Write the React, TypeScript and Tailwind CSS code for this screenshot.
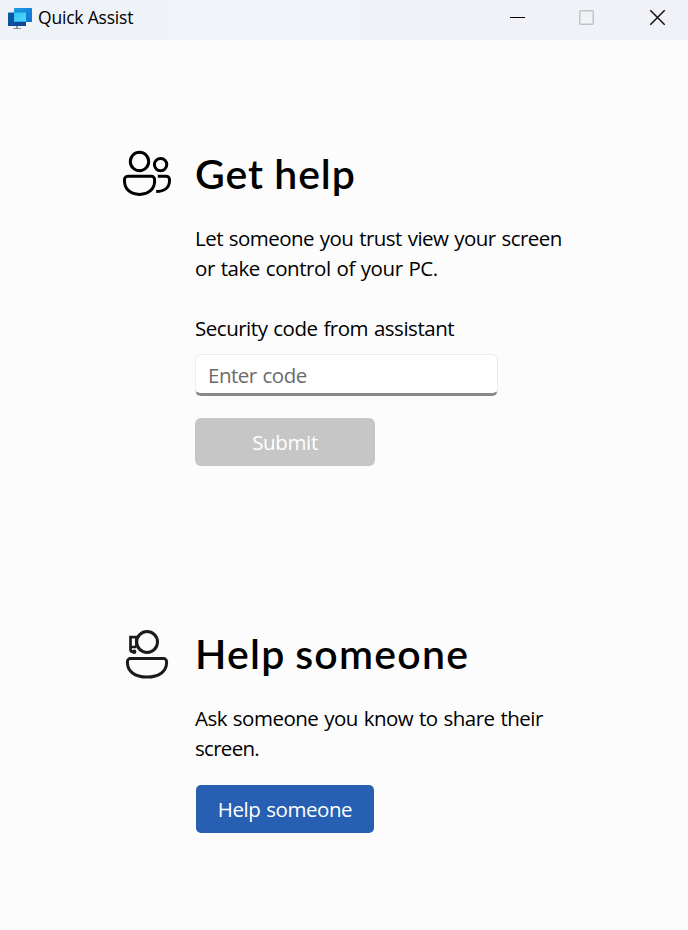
import React from "react";

function AppLogo() {
  return (
    <svg width="24" height="22" viewBox="0 0 24 22" className="shrink-0">
      <defs>
        <linearGradient id="back" x1="0" y1="0" x2="1" y2="1">
          <stop offset="0" stopColor="#0b5cab" />
          <stop offset="1" stopColor="#12448f" />
        </linearGradient>
        <linearGradient id="front" x1="0" y1="0" x2="1" y2="1">
          <stop offset="0" stopColor="#1b9de2" />
          <stop offset="1" stopColor="#0f72d0" />
        </linearGradient>
        <linearGradient id="shared" x1="0" y1="0" x2="1" y2="1">
          <stop offset="0" stopColor="#35c3f3" />
          <stop offset="1" stopColor="#4bdcfb" />
        </linearGradient>
      </defs>
      <path d="M8 18h2v2h3v1H5v-1h3z" fill="#8d9399" />
      <rect x="0" y="4.500" width="18" height="13.500" rx="0.6" fill="url(#back)" />
      <rect x="6" y="0" width="18" height="14" rx="0.6" fill="url(#front)" />
      <path d="M6 4.500h12v9H6z" fill="url(#shared)" />
    </svg>
  );
}

function PeopleIcon() {
  return (
    <svg width="50" height="48" viewBox="0 0 50 48" fill="none" stroke="#000" strokeWidth="3" className="shrink-0">
      <circle cx="17.5" cy="12.5" r="9.2" />
      <circle cx="38.6" cy="15.6" r="6.2" />
      <path d="M5.6 27.3H29.4a3.200 3.200 0 0 1 3.200 3.200V32C32.600 40 26.500 45.400 17.500 45.400S2.500 40 2.500 32V30.500a3.200 3.200 0 0 1 3.100-3.200Z" />
      <path d="M35.800 27.300H44.300a3.200 3.200 0 0 1 3.200 3.200V31.500C47.500 38 43 42.600 34.200 42.600" />
    </svg>
  );
}

function HelperIcon() {
  return (
    <svg width="50" height="50" viewBox="0 0 50 50" fill="none" stroke="#1b1b1b" strokeWidth="3" className="shrink-0">
      <circle cx="25.100" cy="13" r="10.400" />
      <path d="M15 8.200H8.500V20.500Q8.500 23 11.500 23M14.500 18H8.500" strokeWidth="2.700" />
      <path d="M14 8V18" strokeWidth="2" />
      <circle cx="12.200" cy="22.700" r="2.200" fill="#1b1b1b" stroke="none" />
      <path d="M8.400 29.600H41.600a3 3 0 0 1 3 3V33.500C44.600 42 37.500 48.100 25 48.100S5.400 42 5.400 33.500V32.600a3 3 0 0 1 3-3Z" />
    </svg>
  );
}

export default function App() {
  return (
    <div className="flex h-[930px] w-[688px] flex-col overflow-hidden bg-[#fcfcfc] font-['Open_Sans','Noto_Sans',sans-serif] text-[20.5px] text-black">
      <header className="flex h-10 shrink-0 items-start justify-between bg-linear-to-r from-[#eff3f8] to-[#f1f2f7] pl-2">
        <div className="flex items-start gap-1.5 pt-[7px]">
          <div className="pt-px"><AppLogo /></div>
          <h1 className="text-[17.5px] leading-[20px]"><span className="inline-block tracking-[-0.2px]">Quick Assist</span></h1>
        </div>
        <div className="flex pr-[22px] pt-[9px]">
          <svg width="156" height="17" viewBox="0 0 156 17" fill="none">
            <path d="M0 8.500H15" stroke="#000" />
            <rect x="69.750" y="1.750" width="13.500" height="13.500" rx="1" stroke="#c1c3c7" strokeWidth="1.500" />
            <path d="M140.300 1.300L154.700 15.700M154.700 1.300L140.300 15.700" stroke="#111" strokeWidth="1.500" />
          </svg>
        </div>
      </header>
      <main className="flex flex-col">
        <section className="flex h-[480px] gap-[23px] pl-[122px] pt-[109px]">
          <PeopleIcon />
          <div className="flex w-[380px] flex-col items-start">
            <h2 className="mb-[24px] whitespace-nowrap font-['Lato',sans-serif] text-[41px] font-semibold leading-[50px]"><span className="inline-block tracking-[0.95px] [word-spacing:-1px]">Get help</span></h2>
            <p className="whitespace-nowrap leading-[30px]"><span className="inline-block tracking-[-0.53px] [word-spacing:1px]">Let someone you trust view your screen</span><br /><span className="inline-block tracking-[-0.44px] [word-spacing:1px]">or take control of your PC.</span></p>
            <label htmlFor="code" className="mt-[30px] leading-[30px]"><span className="inline-block tracking-[-0.48px] [word-spacing:1px]">Security code from assistant</span></label>
            <div className="mt-[11px] h-[42px] w-[303px] overflow-hidden rounded-[6px] border border-b-[3px] border-[#ebebeb] border-b-[#8a8888] bg-white">
              <input id="code" placeholder="Enter code" className="h-[40px] w-full px-3 tracking-[-0.5px] outline-none [word-spacing:1px] placeholder:text-[#6b6b6b]" />
            </div>
            <button className="mt-[22px] h-12 w-[180px] rounded-[6px] bg-[#c6c6c6] text-white"><span className="inline-block pt-px tracking-[-0.35px]">Submit</span></button>
          </div>
        </section>
        <section className="flex h-[410px] gap-[23px] pl-[122px] pt-[109px]">
          <HelperIcon />
          <div className="flex w-[380px] flex-col items-start">
            <h2 className="mb-[24px] whitespace-nowrap font-['Lato',sans-serif] text-[41px] font-semibold leading-[50px]"><span className="inline-block tracking-[1.25px] [word-spacing:-2px]">Help someone</span></h2>
            <p className="whitespace-nowrap leading-[30px]"><span className="inline-block tracking-[-0.5px] [word-spacing:1px]">Ask someone you know to share their</span><br /><span className="inline-block tracking-[-0.7px]">screen.</span></p>
            <button className="ml-px mt-[22px] h-12 w-[178px] rounded-[5px] bg-[#2760b3] text-white"><span className="inline-block pt-px tracking-[-0.45px] [word-spacing:1px]">Help someone</span></button>
          </div>
        </section>
      </main>
    </div>
  );
}
